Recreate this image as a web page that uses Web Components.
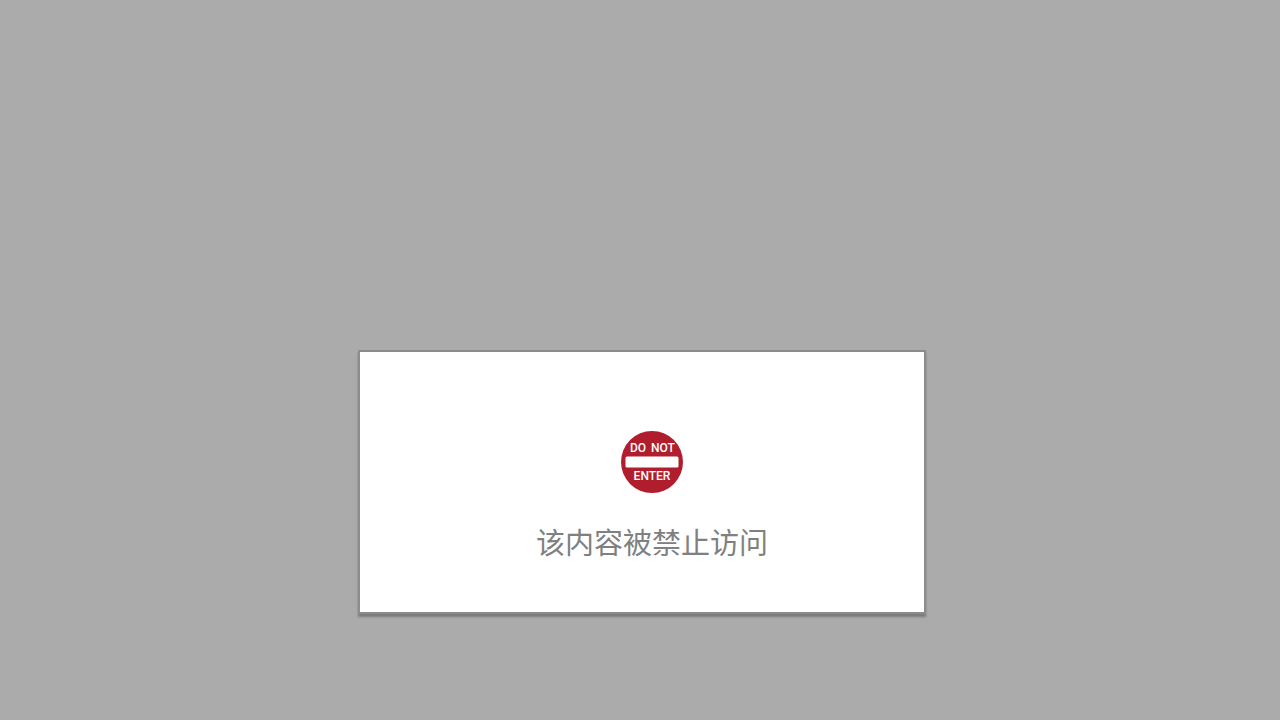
<!DOCTYPE html>
<html lang="zh-CN">
<head>
<meta charset="utf-8">
<meta name="viewport" content="width=device-width, initial-scale=1">
<title>该内容被禁止访问</title>
<style>
html, body { margin: 0; min-height: 100%; background: #ababab; }
body { font-family: "Noto Sans CJK SC", sans-serif; }
</style>
</head>
<body>
<block-page>
  <notice-card>
    <no-entry-sign slot="icon"></no-entry-sign>
    该内容被禁止访问
  </notice-card>
</block-page>
<script>
const define = (name, html) => {
  const template = document.createElement('template');
  template.innerHTML = html;
  customElements.define(name, class extends HTMLElement {
    constructor() {
      super();
      this.attachShadow({ mode: 'open' }).append(template.content.cloneNode(true));
    }
  });
};

define('block-page', `
<style>
:host { display: flex; justify-content: center; box-sizing: border-box; min-height: 100vh; padding: 350px 0 40px 4px; align-items: flex-start; }
</style>
<slot></slot>`);

define('notice-card', `
<style>
:host { display: flex; flex-direction: column; align-items: center; gap: 27px; box-sizing: border-box;
  width: 568px; max-width: 100%; padding: 79px 0 49px 20px; background: #fff; border: 2px solid #8c8c8c;
  box-shadow: 0 3px 2px #7c7c7c; }
p { margin: 0; font-size: 29px; line-height: 43px; color: #808080; }
</style>
<slot name="icon"></slot>
<p><slot></slot></p>`);

define('no-entry-sign', `
<style>
:host { display: block; width: 62px; height: 62px; }
svg { display: block; width: 100%; height: 100%; }
text { font: 500 12px Roboto, sans-serif; fill: #fff; text-anchor: middle; }
</style>
<svg viewBox="0 0 62 62" role="img" aria-label="DO NOT ENTER">
  <circle cx="31" cy="31" r="31" fill="#b01e2e"/>
  <rect x="4.5" y="25.5" width="53" height="11" rx="1.5" fill="#fff"/>
  <text x="17" y="21">DO</text>
  <text x="42" y="21">NOT</text>
  <text x="31" y="49">ENTER</text>
</svg>`);
</script>
</body>
</html>
